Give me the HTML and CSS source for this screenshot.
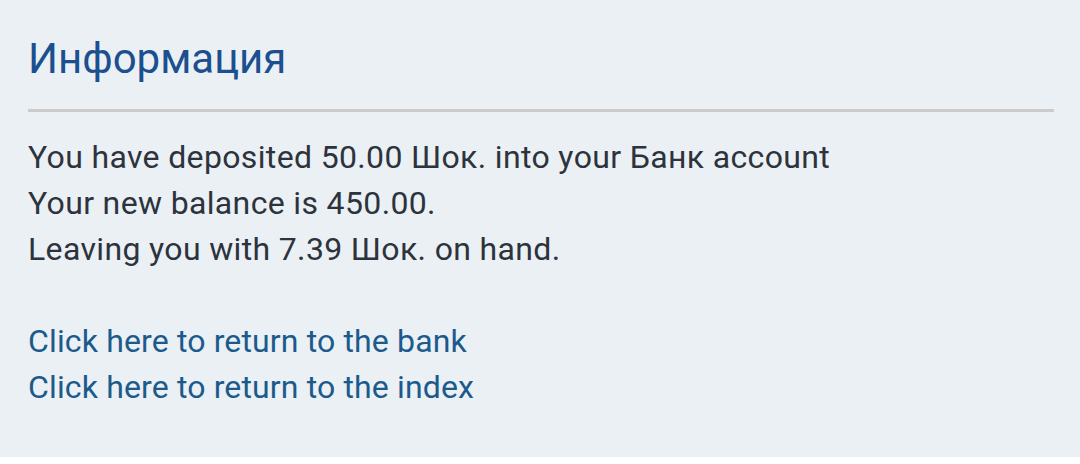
FILE: index.html
```html
<!DOCTYPE html>
<html>
    <head>
        <meta name="viewport" content="width=device-width" />
        <link rel="stylesheet" href="styles.css">
    </head>
    <body>
        <div class="info-panel">
            <h1 class="info-title">Информация</h1>
            <div class="info-body">
                <p class="info-text">
                    You have deposited 50.00 Шок. into your Банк account<br/>
                    Your new balance is 450.00.<br/>
                    Leaving you with 7.39 Шок. on hand.
                </p>
                <div class="info-links">
                    <a href="#">Click here to return to the bank</a><br/>
                    <a href="#">Click here to return to the index</a>
                </div>
            </div>
        </div>
    </body>
</html>
```

FILE: styles.css
```css
* {box-sizing: border-box;}
html, body {margin: 0; padding: 0; background-color: #ffffff;}
body {font-family: "Roboto", "Noto Sans", sans-serif;}

.info-panel {height: 457px; background-color: #eaf0f4; padding: 29px 26px 0 28px;}
.info-title {margin: 0; padding: 0 0 20px 0; font-size: 42px; font-weight: 400; line-height: 60px; color: #1b4f8f; border-bottom: 3px solid #cccccc;}
.info-body {padding-top: 22px;}
.info-text {margin: 0; font-size: 32px; line-height: 46px; letter-spacing: 0.35px; color: #2d333d;}
.info-links {margin-top: 46px; font-size: 32px; line-height: 46px; letter-spacing: 0.14px;}
.info-links a {color: #1c5a8c; text-decoration: none;}
```
